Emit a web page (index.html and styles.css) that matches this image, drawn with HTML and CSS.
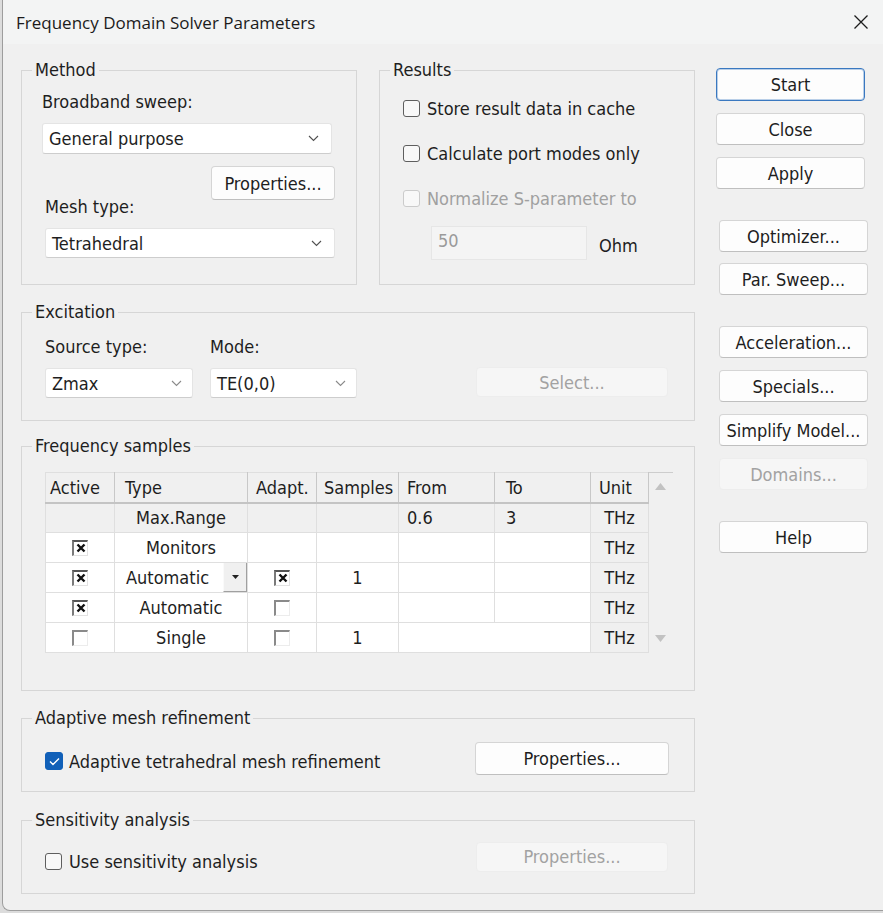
FILE: index.html
```html
<html>
<head>
    <title>Frequency Domain Solver Parameters</title>
    <link rel="stylesheet" href="styles.css">
</head>
<body>
<div class="dialog">
    <div class="titlebar">
        <span class="title-text">Frequency Domain Solver Parameters</span>
        <svg class="close-icon" width="16" height="16" viewBox="0 0 16 16"><path d="M1.5 1.5 L14.5 14.5 M14.5 1.5 L1.5 14.5" stroke="#1c1c1c" stroke-width="1.3" fill="none"/></svg>
    </div>
    <div class="dialog-body">
        <div class="main-col">
            <div class="top-row">
                <fieldset class="group group-method">
                    <legend>Method</legend>
                    <div class="field-label sweep-label">Broadband sweep:</div>
                    <div class="combo combo-sweep">
                        <span>General purpose</span>
                        <svg class="chevron" width="11" height="7" viewBox="0 0 11 7"><path d="M1 1 L5.5 5.5 L10 1" stroke="#505050" stroke-width="1.1" fill="none"/></svg>
                    </div>
                    <button class="btn btn-props">Properties...</button>
                    <div class="field-label mesh-label">Mesh type:</div>
                    <div class="combo combo-mesh">
                        <span>Tetrahedral</span>
                        <svg class="chevron" width="11" height="7" viewBox="0 0 11 7"><path d="M1 1 L5.5 5.5 L10 1" stroke="#505050" stroke-width="1.1" fill="none"/></svg>
                    </div>
                </fieldset>
                <fieldset class="group group-results">
                    <legend>Results</legend>
                    <div class="check-row check-first"><span class="checkbox"></span>Store result data in cache</div>
                    <div class="check-row"><span class="checkbox"></span>Calculate port modes only</div>
                    <div class="check-row is-disabled"><span class="checkbox checkbox-disabled"></span>Normalize S-parameter to</div>
                    <div class="ohm-row">
                        <div class="text-input">50</div>
                        <span class="ohm-label">Ohm</span>
                    </div>
                </fieldset>
            </div>

            <fieldset class="group group-excitation">
                <legend>Excitation</legend>
                <div class="exc-row">
                    <div class="exc-col">
                        <div class="field-label">Source type:</div>
                        <div class="combo combo-small">
                            <span>Zmax</span>
                            <svg class="chevron" width="11" height="7" viewBox="0 0 11 7"><path d="M1 1 L5.5 5.5 L10 1" stroke="#8a8a8a" stroke-width="1.1" fill="none"/></svg>
                        </div>
                    </div>
                    <div class="exc-col exc-col-mode">
                        <div class="field-label">Mode:</div>
                        <div class="combo combo-small">
                            <span>TE(0,0)</span>
                            <svg class="chevron" width="11" height="7" viewBox="0 0 11 7"><path d="M1 1 L5.5 5.5 L10 1" stroke="#8a8a8a" stroke-width="1.1" fill="none"/></svg>
                        </div>
                    </div>
                    <button class="btn btn-disabled btn-select">Select...</button>
                </div>
            </fieldset>

            <fieldset class="group group-freq">
                <legend>Frequency samples</legend>
                <table class="samples">
                    <colgroup>
                        <col style="width: 69px">
                        <col style="width: 133px">
                        <col style="width: 69px">
                        <col style="width: 82px">
                        <col style="width: 96px">
                        <col style="width: 96px">
                        <col style="width: 58px">
                        <col style="width: 24px">
                    </colgroup>
                    <tr>
                        <th class="th-active">Active</th>
                        <th class="th-type">Type</th>
                        <th>Adapt.</th>
                        <th class="th-samples">Samples</th>
                        <th>From</th>
                        <th class="th-to">To</th>
                        <th>Unit</th>
                        <td class="scroll-cell" rowspan="6">
                            <div class="scroll-track">
                                <svg width="11" height="7" viewBox="0 0 11 7"><path d="M0 7 L5.5 0 L11 7 Z" fill="#c2c2c2"/></svg>
                                <svg width="11" height="7" viewBox="0 0 11 7"><path d="M0 0 L5.5 7 L11 0 Z" fill="#c2c2c2"/></svg>
                            </div>
                        </td>
                    </tr>
                    <tr class="row-readonly">
                        <td></td>
                        <td class="cell-center">Max.Range</td>
                        <td></td>
                        <td></td>
                        <td>0.6</td>
                        <td class="cell-to">3</td>
                        <td class="cell-unit">THz</td>
                    </tr>
                    <tr>
                        <td class="cell-center"><span class="tcheck"><svg width="10" height="10" viewBox="0 0 10 10"><path d="M1.5 1.5 L8.5 8.5 M8.5 1.5 L1.5 8.5" stroke="#111" stroke-width="2.4"/></svg></span></td>
                        <td class="cell-center">Monitors</td>
                        <td></td>
                        <td></td>
                        <td></td>
                        <td></td>
                        <td class="cell-unit">THz</td>
                    </tr>
                    <tr>
                        <td class="cell-center"><span class="tcheck"><svg width="10" height="10" viewBox="0 0 10 10"><path d="M1.5 1.5 L8.5 8.5 M8.5 1.5 L1.5 8.5" stroke="#111" stroke-width="2.4"/></svg></span></td>
                        <td class="cell-dd">
                            <div class="type-dd">
                                <span>Automatic</span>
                                <span class="dd-btn"><svg width="7" height="4" viewBox="0 0 7 4"><path d="M0 0 L3.5 4 L7 0 Z" fill="#222"/></svg></span>
                            </div>
                        </td>
                        <td class="cell-center"><span class="tcheck"><svg width="10" height="10" viewBox="0 0 10 10"><path d="M1.5 1.5 L8.5 8.5 M8.5 1.5 L1.5 8.5" stroke="#111" stroke-width="2.4"/></svg></span></td>
                        <td class="cell-center">1</td>
                        <td></td>
                        <td></td>
                        <td class="cell-unit">THz</td>
                    </tr>
                    <tr>
                        <td class="cell-center"><span class="tcheck"><svg width="10" height="10" viewBox="0 0 10 10"><path d="M1.5 1.5 L8.5 8.5 M8.5 1.5 L1.5 8.5" stroke="#111" stroke-width="2.4"/></svg></span></td>
                        <td class="cell-center">Automatic</td>
                        <td class="cell-center"><span class="tcheck tcheck-off"></span></td>
                        <td></td>
                        <td></td>
                        <td></td>
                        <td class="cell-unit">THz</td>
                    </tr>
                    <tr>
                        <td class="cell-center"><span class="tcheck tcheck-off"></span></td>
                        <td class="cell-center">Single</td>
                        <td class="cell-center"><span class="tcheck tcheck-off"></span></td>
                        <td class="cell-center">1</td>
                        <td colspan="2"></td>
                        <td class="cell-unit">THz</td>
                    </tr>
                </table>
            </fieldset>

            <fieldset class="group group-adaptive">
                <legend>Adaptive mesh refinement</legend>
                <div class="option-row option-row-adaptive">
                    <span class="option-check">
                        <span class="checkbox checkbox-checked"><svg width="11" height="9" viewBox="0 0 11 9"><path d="M1 4.5 L4 7.5 L10 1.5" stroke="#fff" stroke-width="1.4" fill="none"/></svg></span>
                        <span>Adaptive tetrahedral mesh refinement</span>
                    </span>
                    <button class="btn btn-wide">Properties...</button>
                </div>
            </fieldset>

            <fieldset class="group group-sensitivity">
                <legend>Sensitivity analysis</legend>
                <div class="option-row option-row-sens">
                    <span class="option-check">
                        <span class="checkbox"></span>
                        <span>Use sensitivity analysis</span>
                    </span>
                    <button class="btn btn-disabled btn-wide btn-wide-off">Properties...</button>
                </div>
            </fieldset>
        </div>

        <div class="side-col">
            <button class="btn side-btn btn-default">Start</button>
            <button class="btn side-btn">Close</button>
            <button class="btn side-btn">Apply</button>
            <div class="side-group">
                <button class="btn side-btn side-sep">Optimizer...</button>
                <button class="btn side-btn side-tight">Par. Sweep...</button>
                <button class="btn side-btn side-sep">Acceleration...</button>
                <button class="btn side-btn">Specials...</button>
                <button class="btn side-btn">Simplify Model...</button>
                <button class="btn btn-disabled side-btn">Domains...</button>
                <button class="btn side-btn side-sep">Help</button>
            </div>
        </div>
    </div>
</div>
</body>
</html>
```

FILE: styles.css
```css
* {
    box-sizing: border-box;
}

body {
    margin: 0;
    background: #dcdcdc;
    font-family: "DejaVu Sans Condensed", "Liberation Sans", sans-serif;
    font-size: 18px;
    color: #1e1e1e;
}

.dialog {
    width: 881px;
    height: 911px;
    margin-left: 2px;
    background: #f0f0f0;
    border-left: 1px solid #9d9d9d;
    border-bottom: 1px solid #9d9d9d;
    border-bottom-left-radius: 8px;
    overflow: hidden;
}

.titlebar {
    height: 44px;
    padding: 0 14px 0 13px;
    display: flex;
    align-items: center;
    justify-content: space-between;
    background: #f3f4f4;
}

.title-text {
    font-family: "Open Sans", "Noto Sans", sans-serif;
    font-size: 17px;
    color: #1b1b1b;
}

.dialog-body {
    padding: 15px 0 0 18px;
    display: flex;
}

.main-col {
    width: 674px;
}

.top-row {
    display: flex;
    gap: 22px;
}

/* group boxes */
.group {
    margin: 0;
    padding: 0;
    border: 1px solid #d6d6d6;
    min-width: 0;
}

.group legend {
    margin-left: 10px;
    padding: 0 3px;
    line-height: 22px;
}

.group-method {
    width: 336px;
    height: 226px;
}

.group-results {
    width: 316px;
    height: 226px;
}

.group-excitation {
    height: 120px;
    margin-top: 16px;
}

.group-freq {
    height: 256px;
    margin-top: 14px;
}

.group-adaptive {
    height: 85px;
    margin-top: 16px;
}

.group-sensitivity {
    height: 85px;
    margin-top: 17px;
}

.field-label {
    line-height: 22px;
}

.sweep-label {
    margin: 10px 0 0 20px;
}

.mesh-label {
    margin: -4px 0 0 23px;
}

/* combos */
.combo {
    height: 30px;
    padding: 0 12px 0 6px;
    display: flex;
    align-items: center;
    justify-content: space-between;
    background: #fff;
    border: 1px solid #e4e4e4;
    border-bottom-color: #cdcdcd;
    border-radius: 3px;
}

.combo-sweep {
    width: 290px;
    height: 31px;
    margin: 10px 0 0 20px;
}

.combo-mesh {
    width: 290px;
    margin: 10px 0 0 23px;
}

.combo-small {
    margin-top: 10px;
    padding-right: 10px;
}

/* buttons */
.btn {
    display: block;
    margin: 0;
    padding: 0;
    font: inherit;
    color: #1e1e1e;
    background: #fdfdfd;
    border: 1px solid #d5d5d5;
    border-bottom-color: #bfbfbf;
    border-radius: 4px;
}

.btn-disabled {
    color: #a2a2a2;
    background: #f6f6f6;
    border-color: #ededed;
}

.btn-props {
    width: 124px;
    height: 34px;
    margin: 12px 0 0 189px;
}

.btn-select {
    width: 192px;
    height: 30px;
    margin: 0 26px 1px auto;
}

.btn-wide {
    width: 194px;
    height: 33px;
    margin-left: auto;
    margin-right: 25px;
}

.btn-wide-off {
    width: 192px;
    height: 30px;
    margin-right: 26px;
}

/* checkboxes */
.check-row {
    height: 22px;
    margin: 23px 0 0 23px;
    display: flex;
    align-items: center;
}

.check-first {
    margin-top: 16px;
}

.is-disabled {
    color: #a0a0a0;
}

.checkbox {
    width: 17px;
    height: 17px;
    margin-right: 7px;
    flex: none;
    background: #f8f8f8;
    border: 1px solid #5e5e5e;
    border-radius: 3px;
}

.checkbox-disabled {
    border-color: #cbcbcb;
}

.checkbox-checked {
    width: 18px;
    height: 18px;
    margin-right: 6px;
    display: flex;
    align-items: center;
    justify-content: center;
    background: #1160b8;
    border-color: #1160b8;
}

.ohm-row {
    margin: 17px 0 0 51px;
    display: flex;
    align-items: center;
}

.text-input {
    width: 156px;
    height: 34px;
    padding: 3px 0 0 6px;
    color: #9a9a9a;
    background: #f4f4f4;
    border: 1px solid #e6e6e6;
}

.ohm-label {
    margin: 4px 0 0 12px;
}

/* excitation */
.exc-row {
    margin-top: 13px;
    padding-left: 23px;
    display: flex;
    align-items: flex-end;
}

.exc-col {
    width: 148px;
}

.exc-col-mode {
    width: 147px;
    margin-left: 17px;
}

/* frequency table */
.samples {
    width: 627px;
    margin: 15px 0 0 23px;
    border-collapse: collapse;
    table-layout: fixed;
    font-size: 18px;
    background: #fff;
    border-top: 1px solid #cdcdcd;
}

.samples th,
.samples td {
    height: 30px;
    padding: 0 0 0 8px;
    font-weight: normal;
    text-align: left;
    white-space: nowrap;
    overflow: hidden;
    border: 1px solid #dfdfdf;
}

.samples th {
    background: #f0f0f0;
    border-right-color: #c8c8c8;
    border-bottom: 2px solid #c4c4c4;
}

.samples .th-active {
    padding-left: 4px;
}

.samples .th-type {
    padding-left: 10px;
}

.samples .th-samples {
    padding-left: 7px;
}

.samples .th-to,
.samples .cell-to {
    padding-left: 11px;
}

.samples .cell-center {
    padding: 0;
    text-align: center;
}

.samples .cell-unit {
    padding: 0;
    text-align: center;
    background: #f0f0f0;
}

.row-readonly td {
    background: #f0f0f0;
}

.samples .scroll-cell {
    padding: 0;
    vertical-align: top;
    background: #f0f0f0;
    border: none;
}

.scroll-track {
    height: 178px;
    padding: 10px 0 9px;
    display: flex;
    flex-direction: column;
    align-items: center;
    justify-content: space-between;
}

.tcheck {
    width: 16px;
    height: 16px;
    display: inline-flex;
    align-items: center;
    justify-content: center;
    vertical-align: middle;
    background: #fff;
    border-style: solid;
    border-width: 2px 1px 1px 2px;
    border-color: #555 #e2e2e2 #e2e2e2 #7a7a7a;
}

.tcheck-off {
    border-color: #8a8a8a #ececec #ececec #8a8a8a;
}

.samples .cell-dd {
    padding: 0 0 0 11px;
}

.type-dd {
    height: 29px;
    display: flex;
    align-items: center;
    justify-content: space-between;
}

.dd-btn {
    width: 24px;
    height: 29px;
    display: flex;
    align-items: center;
    justify-content: center;
    background: #f0f0f0;
    border-right: 1px solid #a0a0a0;
    border-bottom: 1px solid #a0a0a0;
    border-left: 1px solid #fafafa;
}

/* bottom groups */
.option-row {
    padding-left: 23px;
    display: flex;
    align-items: center;
}

.option-check {
    display: flex;
    align-items: center;
}

.option-row-adaptive {
    margin-top: 13px;
}

.option-row-adaptive .option-check {
    margin-top: 5px;
}

.option-row-sens {
    margin-top: 10px;
}

.option-row-sens .option-check {
    margin-top: 10px;
}

/* side buttons */
.side-col {
    margin-left: 21px;
    padding-top: 9px;
}

.side-btn {
    width: 149px;
    height: 32px;
    margin-top: 12px;
}

.btn-default {
    height: 33px;
    margin-top: 0;
    border-color: #3a78c0;
    box-shadow: inset 0 0 0 1px rgba(58, 120, 192, .35);
}

.side-group {
    padding-left: 3px;
}

.side-sep {
    margin-top: 31px;
}

.side-tight {
    margin-top: 11px;
}
```
